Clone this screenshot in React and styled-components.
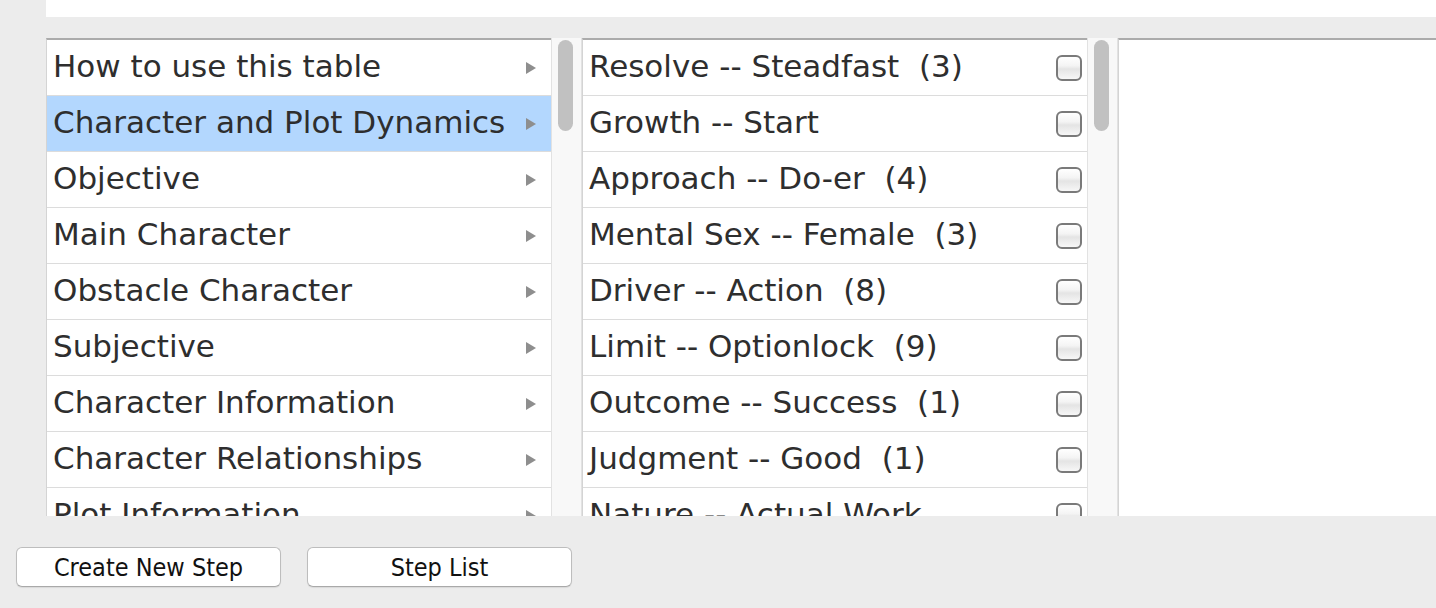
import React from "react";
import styled, { createGlobalStyle } from "styled-components";

const GlobalStyle = createGlobalStyle`
  html, body {
    margin: 0;
    padding: 0;
    background: #ececec;
  }
  body {
    font-family: "DejaVu Sans", "Liberation Sans", sans-serif;
  }
`;

const Page = styled.div`
  width: 1436px;
  height: 608px;
  overflow: hidden;
  display: flex;
  flex-direction: column;
`;

const TopPanel = styled.div`
  margin-left: 46px;
  height: 17px;
  background: #fff;
`;

const Tables = styled.div`
  margin: 21px 0 0 46px;
  height: 478px;
  display: flex;
  overflow: hidden;
`;

const ListPane = styled.div`
  width: 505px;
  border-top: 2px solid #ababab;
  border-left: 1px solid #d4d4d4;
  background: #fff;
  overflow: hidden;
  box-sizing: border-box;
  flex: none;
`;

const Row = styled.div`
  height: 55px;
  border-bottom: 1px solid #dcdcdc;
  display: flex;
  align-items: center;
  padding: 0 5px 0 6px;
  background: ${(p) => (p.$selected ? "#b3d7fe" : "#fff")};
  color: #2e2e2e;
  font-size: 31px;
  white-space: pre;
`;

const Label = styled.span`
  flex: 1;
  min-width: 0;
  line-height: 1.3;
  margin-top: -2px;
`;

const Arrow = styled.span`
  width: 0;
  height: 0;
  border-top: 6px solid transparent;
  border-bottom: 6px solid transparent;
  border-left: 10px solid #8e8e8e;
  margin-right: 10px;
  flex: none;
`;

const Check = styled.span`
  width: 26px;
  height: 26px;
  border: 2px solid #7a7a7a;
  border-radius: 6px;
  background: linear-gradient(#fff 0%, #f4f4f4 40%, #e4e4e4 55%, #f7f7f7 100%);
  box-sizing: border-box;
  flex: none;
`;

const ScrollTrack = styled.div`
  width: 31px;
  flex: none;
  background: #f8f8f8;
  border-left: 1px solid #e2e2e2;
  border-right: 1px solid #e2e2e2;
  box-sizing: border-box;
  padding: 2px 0 0 6px;
`;

const Thumb = styled.div`
  width: 15px;
  height: 91px;
  border-radius: 8px;
  background: #c1c1c1;
`;

const RightPane = styled.div`
  flex: 1;
  background: #fff;
  border-top: 2px solid #ababab;
  border-left: 1px solid #d4d4d4;
`;

const Footer = styled.div`
  display: flex;
  gap: 26px;
  padding: 31px 0 0 16px;
`;

const Button = styled.button`
  width: 265px;
  height: 40px;
  background: #fff;
  border: 1px solid #bdbdbd;
  border-bottom-color: #a9a9a9;
  border-radius: 6px;
  box-shadow: 0 1px 1px rgba(0, 0, 0, 0.08);
  font-family: "DejaVu Sans Condensed", "DejaVu Sans", sans-serif;
  font-size: 25px;
  line-height: 1;
  color: #111;
  padding: 0;
`;

const topics = [
  "How to use this table",
  "Character and Plot Dynamics",
  "Objective",
  "Main Character",
  "Obstacle Character",
  "Subjective",
  "Character Information",
  "Character Relationships",
  "Plot Information",
];

const dynamics = [
  "Resolve -- Steadfast  (3)",
  "Growth -- Start",
  "Approach -- Do-er  (4)",
  "Mental Sex -- Female  (3)",
  "Driver -- Action  (8)",
  "Limit -- Optionlock  (9)",
  "Outcome -- Success  (1)",
  "Judgment -- Good  (1)",
  "Nature -- Actual Work",
];

export default function App() {
  return (
    <Page>
      <GlobalStyle />
      <TopPanel />
      <Tables>
        <ListPane>
          {topics.map((t, i) => (
            <Row key={t} $selected={i === 1}>
              <Label>{t}</Label>
              <Arrow />
            </Row>
          ))}
        </ListPane>
        <ScrollTrack>
          <Thumb />
        </ScrollTrack>
        <ListPane>
          {dynamics.map((t) => (
            <Row key={t}>
              <Label>{t}</Label>
              <Check />
            </Row>
          ))}
        </ListPane>
        <ScrollTrack>
          <Thumb />
        </ScrollTrack>
        <RightPane />
      </Tables>
      <Footer>
        <Button>Create New Step</Button>
        <Button>Step List</Button>
      </Footer>
    </Page>
  );
}
